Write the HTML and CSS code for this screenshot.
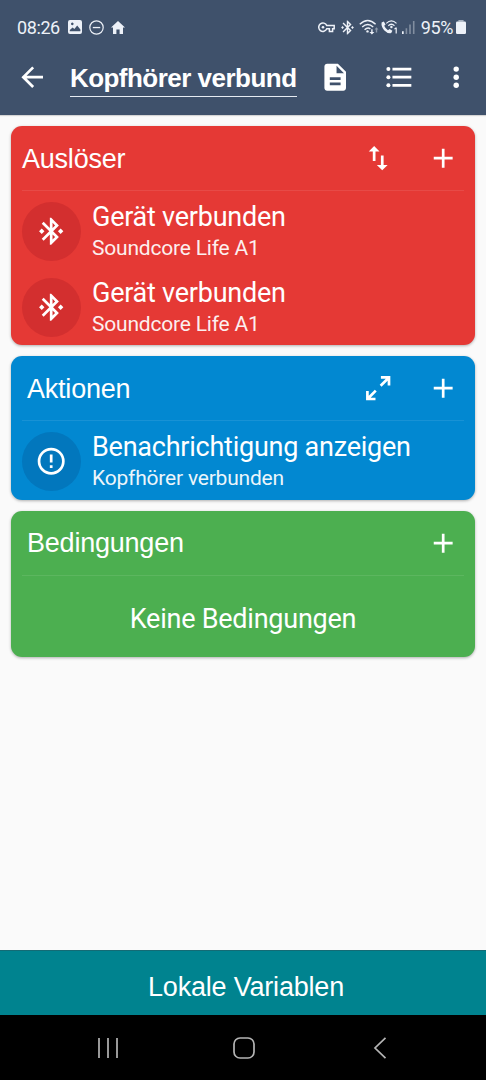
FILE: index.html
```html
<!DOCTYPE html>
<html lang="de">
<head>
  <meta charset="UTF-8">
  <meta name="viewport" content="width=device-width, initial-scale=1.0">
  <title>Kopfhörer verbunden</title>
  <link rel="stylesheet" href="styles.css">
</head>
<body>

  <!-- Shared icons -->
  <svg class="sprite">
    <symbol id="plus" viewBox="0 0 24 24"><path d="M19 13h-6v6h-2v-6H5v-2h6V5h2v6h6v2z"/></symbol>
    <symbol id="bluetooth" viewBox="0 0 24 24"><path d="M7 12l-2-2-2 2 2 2 2-2zm10.71-4.29L12 2h-1v7.59L6.41 5 5 6.41 10.59 12 5 17.59 6.41 19 11 14.41V22h1l5.71-5.71-4.3-4.29 4.3-4.29zM13 5.83l1.88 1.88L13 9.59V5.83zm1.88 10.46L13 18.17v-3.76l1.88 1.88zM19 10l-2 2 2 2 2-2-2-2z"/></symbol>
  </svg>

  <header class="app-bar">
    <div class="status-bar">
      <span class="time">08:26</span>
      <svg class="s-image" viewBox="0 0 14 14"><path fill-rule="evenodd" d="M2 0h10a2 2 0 0 1 2 2v10a2 2 0 0 1-2 2H2a2 2 0 0 1-2-2V2a2 2 0 0 1 2-2zM1.8 11.2h10.6V9.4L9.2 5.6 6.4 9 4.6 7.4 1.8 10zM4.3 2.6a1.3 1.3 0 1 0 .01 0z"/></svg>
      <svg class="s-dnd" viewBox="0 0 15 15"><circle cx="7.5" cy="7.5" r="6.7" fill="none" stroke="currentColor" stroke-width="1.2"/><path d="M3.8 6.9h7.4v1.3H3.8z"/></svg>
      <svg class="s-home" viewBox="0 0 14 13"><path d="M7 0l7 6.6h-2V13H8.6V8.5H5.4V13H2V6.6H0z"/></svg>
      <div class="status-right">
        <svg class="s-key" viewBox="0 0 17 11"><path fill="none" stroke="currentColor" stroke-width="1.5" d="M8.8 3.6H16.2V6.8H14.6V9.6H11.4V6.8H8.8A4.2 4.2 0 1 1 8.8 3.6z"/><circle cx="5" cy="5.2" r="1.3"/></svg>
        <svg class="s-bt"><use href="#bluetooth"/></svg>
        <svg class="s-wifi" viewBox="0 0 20 16"><g fill="none" stroke="currentColor" stroke-width="1.4"><path d="M.8 5.2Q8.7-2.4 16.6 5.2"/><path d="M3.2 8.1Q8.7 2.8 14.2 8.1"/><path d="M5.6 10.8Q8.7 7.8 11.4 10"/></g><circle cx="8.5" cy="12.4" r="1.2"/><path d="M12.2 10.2h1.4V13h1.8l-2.5 2.6-2.5-2.6h1.8z"/><path opacity=".45" d="M16.8 13.5v-2.9h-1.2l1.9-2.3 1.9 2.3h-1.2v2.9z"/></svg>
        <svg class="s-call" viewBox="0 0 17 14"><path d="M.6 2.4L2.8 1.4 4.6 4.4 3.2 5.8Q4.4 8.7 7 10.2L8.6 8.9 11.4 10.8 10.2 13Q6.8 13.9 3.4 10.4 0 6.4.6 2.4z"/><g fill="none" stroke="currentColor" stroke-width="1.2"><path d="M5.3 3.4Q10.4-1.6 15.5 3.4"/><path d="M7.3 5.7Q10.4 2.8 13.5 5.7"/></g><circle cx="10.4" cy="7" r="1.2"/><path d="M14.6 7.6h1.2v5.9h-1.2V9l-1.2.4V8.3z"/></svg>
        <svg class="s-signal" viewBox="0 0 13 13"><path d="M0 10.2h1.7V13H0z"/><path opacity=".38" d="M3.6 7.2h1.6V13H3.6zM7.2 3.6h1.6V13H7.2zM10.9 0h1.6v13h-1.6z"/></svg>
        <span class="battery-text">95%</span>
        <svg class="s-battery" viewBox="0 0 10 14"><path opacity=".6" d="M2.4 0h5.2v1.6H2.4z"/><rect y="1.5" width="10" height="12.5" rx="1.2"/></svg>
      </div>
    </div>

    <div class="toolbar">
      <svg class="icon" viewBox="0 0 24 24"><path d="M20 11H7.83l5.59-5.59L12 4l-8 8 8 8 1.41-1.41L7.83 13H20v-2z"/></svg>
      <div class="macro-name">Kopfhörer verbund</div>
      <svg class="icon" viewBox="0 0 24 24"><path d="M14 2H6c-1.1 0-1.99.9-1.99 2L4 20c0 1.1.89 2 1.99 2H18c1.1 0 2-.9 2-2V8l-6-6zm2 16H8v-2h8v2zm0-4H8v-2h8v2zm-3-5V3.5L18.5 9H13z"/></svg>
      <svg class="icon list-icon" viewBox="0 0 24 24"><circle cx="4" cy="6" r="1.5"/><circle cx="4" cy="12" r="1.5"/><circle cx="4" cy="18" r="1.5"/><path d="M7 5h14v2H7zM7 11h14v2H7zM7 17h14v2H7z"/></svg>
      <svg class="icon more-icon" viewBox="0 0 24 24"><circle cx="12" cy="6" r="2"/><circle cx="12" cy="12" r="2"/><circle cx="12" cy="18" r="2"/></svg>
    </div>
  </header>

  <main class="cards">
    <!-- Triggers -->
    <section class="card triggers">
      <div class="card-header">
        <h2>Auslöser</h2>
        <svg class="icon" viewBox="0 0 24 24"><path d="M16 17.01V10h-2v7.01h-3L15 21l4-3.99h-3zM9 3L5 6.99h3V14h2V6.99h3L9 3z"/></svg>
        <svg class="icon"><use href="#plus"/></svg>
      </div>
      <div class="entry">
        <div class="badge"><svg class="icon"><use href="#bluetooth"/></svg></div>
        <div class="entry-text">
          <div class="entry-title">Gerät verbunden</div>
          <div class="entry-sub">Soundcore Life A1</div>
        </div>
      </div>
      <div class="entry">
        <div class="badge"><svg class="icon"><use href="#bluetooth"/></svg></div>
        <div class="entry-text">
          <div class="entry-title">Gerät verbunden</div>
          <div class="entry-sub">Soundcore Life A1</div>
        </div>
      </div>
    </section>

    <!-- Actions -->
    <section class="card actions">
      <div class="card-header">
        <h2>Aktionen</h2>
        <svg class="icon" viewBox="0 0 24 24"><path d="M10 21v-2H6.41l4.5-4.5-1.41-1.41-4.5 4.5V14H3v7h7m4.5-10.09l4.5-4.5V10h2V3h-7v2h3.59l-4.5 4.5 1.41 1.41z"/></svg>
        <svg class="icon"><use href="#plus"/></svg>
      </div>
      <div class="entry">
        <div class="badge"><svg class="icon" viewBox="0 0 24 24"><circle cx="12" cy="12" r="9" fill="none" stroke="currentColor" stroke-width="2"/><path d="M11 7h2v6h-2zM11 15h2v2h-2z"/></svg></div>
        <div class="entry-text">
          <div class="entry-title">Benachrichtigung anzeigen</div>
          <div class="entry-sub">Kopfhörer verbunden</div>
        </div>
      </div>
    </section>

    <!-- Constraints -->
    <section class="card constraints">
      <div class="card-header">
        <h2>Bedingungen</h2>
        <svg class="icon"><use href="#plus"/></svg>
      </div>
      <div class="empty">Keine Bedingungen</div>
    </section>
  </main>

  <div class="local-vars">Lokale Variablen</div>

  <nav class="nav-bar">
    <svg viewBox="0 0 22 22"><path d="M2 1v20M11 1v20M20 1v20"/></svg>
    <svg viewBox="0 0 22 22"><rect x="1" y="1" width="20" height="20" rx="6"/></svg>
    <svg viewBox="0 0 22 22"><path d="M16.5.8L6 11l10.5 10.2"/></svg>
  </nav>

</body>
</html>
```
FILE: styles.css
```css
* {
  box-sizing: border-box;
}

body {
  margin: 0;
  height: 1080px;
  display: flex;
  flex-direction: column;
  overflow: hidden;
  background: #fafafa;
  color: #fff;
  font-family: Roboto, sans-serif;
}

svg {
  display: block;
  flex: none;
  fill: currentColor;
}

.sprite {
  display: none;
}

.icon {
  width: 32.4px;
  height: 32.4px;
}

/* Top bar */
.app-bar {
  height: 115px;
  flex: none;
  background: #3f516b;
  box-shadow: 0 1px 1px rgba(0, 0, 0, 0.15);
}

.status-bar {
  height: 54px;
  padding: 0 20px 0 17px;
  display: flex;
  align-items: center;
  color: #edf1f8;
  font-size: 18px;
  letter-spacing: -0.4px;
}

.time {
  width: 51px;
}

.s-image { width: 14px; height: 14px; }
.s-dnd { width: 15px; height: 15px; margin-left: 7px; }
.s-home { width: 14px; height: 13px; margin-left: 7px; }

.status-right {
  margin-left: auto;
  display: flex;
  align-items: center;
}

.s-key { width: 17px; height: 11px; }
.s-bt { width: 17px; height: 17px; margin-left: 4px; }
.s-wifi { width: 20px; height: 16px; margin-left: 3px; }
.s-call { width: 17px; height: 14px; margin-left: 2px; }
.s-signal { width: 13px; height: 13px; margin-left: 4px; }
.battery-text { margin-left: 6px; }
.s-battery { width: 10px; height: 14px; margin-left: 3px; }

.toolbar {
  height: 47px;
  padding: 0 14px 0 16px;
  display: flex;
  align-items: center;
}

.macro-name {
  width: 227px;
  height: 37px;
  margin: 2px 22px 0 21.5px;
  border-bottom: 1px solid #e6ebf2;
  font: bold 26px/36px "Liberation Sans", sans-serif;
  letter-spacing: -0.52px;
  white-space: nowrap;
}

.list-icon { margin-left: 32px; }
.more-icon { margin-left: 24.5px; }

/* Cards */
.cards {
  flex: 1;
  padding: 11px;
  display: flex;
  flex-direction: column;
  gap: 11px;
}

.card {
  border-radius: 11px;
  padding: 0 11px;
  box-shadow: 0 1px 3px rgba(0, 0, 0, 0.3);
}

.triggers { height: 219px; background: #e53935; }
.actions { height: 143.5px; background: #0288d1; }
.constraints { height: 146.5px; background: #4caf50; }

.card-header {
  height: 65px;
  margin-bottom: 2px;
  padding: 1px 5px 0 0;
  display: flex;
  align-items: center;
  gap: 32.4px;
  border-bottom: 1px solid rgba(255, 255, 255, 0.09);
}

.card-header h2 {
  flex: 1;
  margin: 0;
  font: 27px/32px "Liberation Sans", sans-serif;
  letter-spacing: -0.22px;
}

.actions h2,
.constraints h2 {
  padding-left: 5px;
}

.entry {
  height: 76px;
  display: flex;
  align-items: center;
  gap: 11px;
}

.badge {
  width: 59px;
  height: 59px;
  border-radius: 50%;
  display: flex;
  align-items: center;
  justify-content: center;
}

.triggers .badge { background: #d32f2f; }
.actions .badge { background: #0277bd; }

.entry-text {
  white-space: nowrap;
}

.entry-title {
  font-size: 27px;
  line-height: 34px;
  letter-spacing: -0.24px;
}

.entry-sub {
  font-size: 21px;
  line-height: 29px;
  letter-spacing: -0.2px;
  opacity: 0.92;
}

.empty {
  height: 80px;
  line-height: 83px;
  text-align: center;
  font-size: 27px;
  letter-spacing: -0.24px;
}

/* Bottom */
.local-vars {
  height: 65px;
  flex: none;
  padding-left: 6px;
  border-top: 1px solid #146b75;
  background: #00838f;
  text-align: center;
  font: 27px/72px "Liberation Sans", sans-serif;
  letter-spacing: -0.2px;
}

.nav-bar {
  height: 65px;
  flex: none;
  padding: 1px 95px 0 97px;
  display: flex;
  align-items: center;
  justify-content: space-between;
  background: #000;
}

.nav-bar svg {
  width: 22px;
  height: 22px;
  fill: none;
  stroke: #b4b4b4;
  stroke-width: 1.7;
}
```
